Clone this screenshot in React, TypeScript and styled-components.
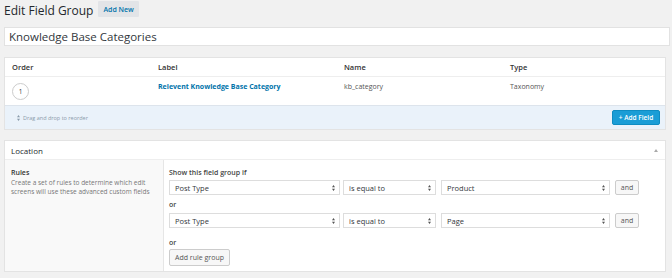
import React from 'react';
import styled, { createGlobalStyle } from 'styled-components';

const GlobalStyle = createGlobalStyle`
  html, body {
    margin: 0;
    padding: 0;
    background: #f1f1f1;
    font-family: "Open Sans", "Liberation Sans", sans-serif;
    color: #333;
  }
`;

const Page = styled.div`
  padding: 1px 2px 0 4px;
  width: 672px;
  box-sizing: border-box;
`;

const TitleBar = styled.div`
  display: flex;
  align-items: flex-start;
  gap: 5px;
  height: 20px;
`;

const Title = styled.h1`
  margin: 0;
  font-size: 12px;
  line-height: 18px;
  font-weight: 400;
  color: #23282d;
  padding-top: 1px;
`;

const SmallButton = styled.span`
  display: inline-flex;
  align-items: center;
  height: 16px;
  padding: 0 5px;
  background: #e2e4e7;
  color: #0073aa;
  font-size: 7px;
  font-weight: 600;
  border-radius: 1px;
`;

const TitleInput = styled.div`
  margin-top: 6px;
  height: 17px;
  background: #fff;
  border: 1px solid #e2e2e2;
  display: flex;
  align-items: center;
  padding: 0 4px;
  font-size: 11.5px;
  color: #32373c;
`;

const Panel = styled.div<{ $top: number }>`
  margin-top: ${(p) => p.$top}px;
  margin-right: 4px;
  background: #fff;
  border: 1px solid #e3e3e3;
`;

const FieldGrid = styled.div<{ $height: number }>`
  display: grid;
  grid-template-columns: 146px 186px 166px 1fr;
  align-items: center;
  height: ${(p) => p.$height}px;
  padding-left: 7px;
  box-sizing: border-box;
`;

const HeadRow = styled(FieldGrid)`
  border-bottom: 1px solid #eee;
  font-size: 7.5px;
  font-weight: 600;
  color: #333;
`;

const BodyRow = styled(FieldGrid)`
  align-items: start;
  padding-top: 5px;
  font-size: 7px;
  color: #555;
`;

const OrderCircle = styled.span`
  display: inline-flex;
  align-items: center;
  justify-content: center;
  width: 15px;
  height: 15px;
  margin-top: 1px;
  border-radius: 50%;
  border: 1px solid #ccc;
  font-size: 6.5px;
  color: #333;
`;

const FieldLink = styled.span`
  color: #0073aa;
  font-weight: 700;
`;

const FieldFooter = styled.div`
  display: flex;
  align-items: center;
  justify-content: space-between;
  height: 23px;
  background: #eaf2fa;
  border-top: 1px solid #dde4ec;
  padding: 0 5px 0 12px;
`;

const DragHint = styled.span`
  display: flex;
  align-items: center;
  gap: 3px;
  font-size: 5.5px;
  color: #8a9bab;
`;

const PrimaryButton = styled.span`
  display: inline-flex;
  align-items: center;
  justify-content: center;
  width: 48px;
  height: 15px;
  background: #1a9dd6;
  border: 1px solid #0e8cc2;
  box-sizing: border-box;
  border-radius: 2px;
  color: #fff;
  font-size: 6.5px;
  font-weight: 600;
`;

const PanelHeader = styled.div`
  display: flex;
  align-items: center;
  justify-content: space-between;
  height: 18px;
  padding: 0 7px 0 6px;
  border-bottom: 1px solid #eee;
  font-size: 8px;
  color: #23282d;
`;

const Caret = styled.span`
  width: 0;
  height: 0;
  border-left: 2px solid transparent;
  border-right: 2px solid transparent;
  border-bottom: 3px solid #aaa;
`;

const LocationBody = styled.div`
  display: grid;
  grid-template-columns: 159px 1fr;
`;

const Side = styled.div`
  background: #f9f9f9;
  border-right: 1px solid #e6e6e6;
  padding: 7px 6px;
`;

const SideTitle = styled.div`
  font-size: 7px;
  font-weight: 600;
  color: #333;
  line-height: 11px;
`;

const SideText = styled.div`
  font-size: 6.5px;
  color: #777;
  line-height: 9px;
`;

const Rules = styled.div`
  padding: 7px 5px 5px 5px;
  display: flex;
  flex-direction: column;
  align-items: flex-start;
`;

const RuleLabel = styled.div<{ $before: number; $after: number }>`
  margin: ${(p) => `${p.$before}px 0 ${p.$after}px`};
  line-height: 12px;
  font-size: 7px;
  font-weight: 600;
  color: #444;
`;

const RuleRow = styled.div`
  display: flex;
  align-items: center;
  height: 15px;
`;

const Select = styled.div<{ $width: number; $gap: number }>`
  width: ${(p) => p.$width}px;
  margin-right: ${(p) => p.$gap}px;
  height: 15px;
  box-sizing: border-box;
  border: 1px solid #ddd;
  background: #fff;
  display: flex;
  align-items: center;
  justify-content: space-between;
  padding: 0 4px 0 5px;
  font-size: 7.5px;
  color: #32373c;
`;

const GhostButton = styled.span<{ $width: number; $height: number }>`
  display: inline-flex;
  align-items: center;
  justify-content: center;
  width: ${(p) => p.$width}px;
  height: ${(p) => p.$height}px;
  box-sizing: border-box;
  border: 1px solid #ccc;
  background: #f7f7f7;
  border-radius: 2px;
  font-size: 7px;
  color: #555;
`;

const UpDown: React.FC<{ color?: string }> = ({ color = '#555' }) => (
  <svg width="3" height="6" viewBox="0 0 3 6">
    <path d="M1.5 0 L3 2.2 L0 2.2 Z M1.5 6 L3 3.8 L0 3.8 Z" fill={color} />
  </svg>
);

const SelectBox: React.FC<{ width: number; gap: number; value: string }> = ({ width, gap, value }) => (
  <Select $width={width} $gap={gap}>
    <span>{value}</span>
    <UpDown />
  </Select>
);

const rules = [
  { type: 'Post Type', op: 'is equal to', value: 'Product' },
  { type: 'Post Type', op: 'is equal to', value: 'Page' },
];

const App: React.FC = () => {
  return (
    <Page>
      <GlobalStyle />
      <TitleBar>
        <Title>Edit Field Group</Title>
        <SmallButton>Add New</SmallButton>
      </TitleBar>
      <TitleInput>Knowledge Base Categories</TitleInput>

      <Panel $top={11}>
        <HeadRow $height={19}>
          <span>Order</span>
          <span>Label</span>
          <span>Name</span>
          <span>Type</span>
        </HeadRow>
        <BodyRow $height={28}>
          <OrderCircle>1</OrderCircle>
          <FieldLink>Relevent Knowledge Base Category</FieldLink>
          <span>kb_category</span>
          <span>Taxonomy</span>
        </BodyRow>
        <FieldFooter>
          <DragHint>
            <UpDown color="#8a9bab" />
            Drag and drop to reorder
          </DragHint>
          <PrimaryButton>+ Add Field</PrimaryButton>
        </FieldFooter>
      </Panel>

      <Panel $top={10}>
        <PanelHeader>
          <span>Location</span>
          <Caret />
        </PanelHeader>
        <LocationBody>
          <Side>
            <SideTitle>Rules</SideTitle>
            <SideText>
              Create a set of rules to determine which edit
              <br />
              screens will use these advanced custom fields
            </SideText>
          </Side>
          <Rules>
            <RuleLabel $before={0} $after={1}>Show this field group if</RuleLabel>
            {rules.map((r, i) => (
              <React.Fragment key={i}>
                {i > 0 && <RuleLabel $before={4} $after={2}>or</RuleLabel>}
                <RuleRow>
                  <SelectBox width={171} gap={3} value={r.type} />
                  <SelectBox width={93} gap={5} value={r.op} />
                  <SelectBox width={169} gap={5} value={r.value} />
                  <GhostButton $width={24} $height={15}>and</GhostButton>
                </RuleRow>
              </React.Fragment>
            ))}
            <RuleLabel $before={9} $after={0}>or</RuleLabel>
            <GhostButton $width={61} $height={17}>Add rule group</GhostButton>
          </Rules>
        </LocationBody>
      </Panel>
    </Page>
  );
};

export default App;
